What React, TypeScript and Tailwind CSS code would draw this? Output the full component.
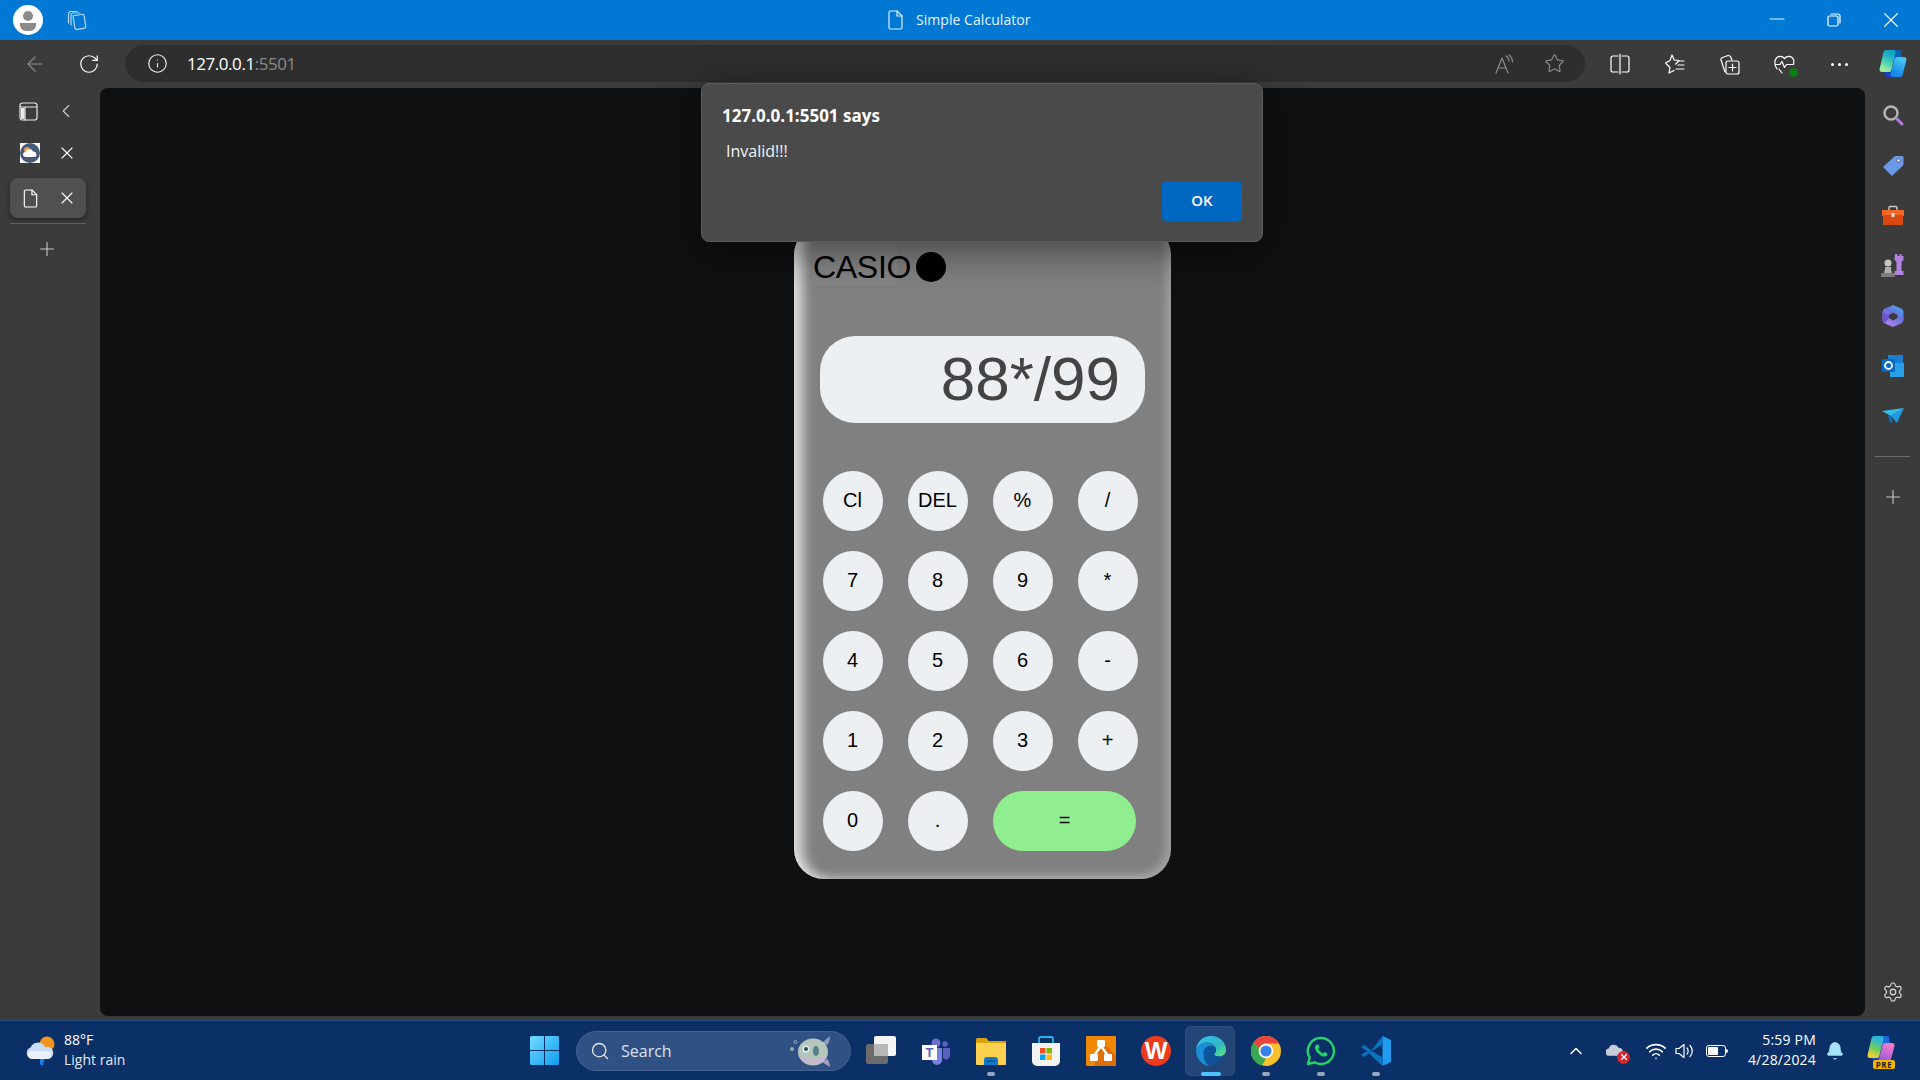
import React from "react";
import { ArrowLeft, RotateCw, Info, Star, Plus, X, Minus, ChevronLeft, ChevronUp, Search, Settings, Bell, Wifi } from "lucide-react";

const Stroke = ({ className, children, vb = "0 0 20 20" }: { className?: string; children: React.ReactNode; vb?: string }) => (
  <svg viewBox={vb} className={className} fill="none" stroke="currentColor" strokeWidth="1.2" strokeLinecap="round" strokeLinejoin="round">{children}</svg>
);

const FileIcon = ({ className }: { className?: string }) => (
  <Stroke className={className} vb="0 0 16 20"><path d="M3 1h6.5L14.5 6v11.5a1.5 1.5 0 0 1-1.5 1.5H3a1.5 1.5 0 0 1-1.5-1.5v-15A1.5 1.5 0 0 1 3 1z" /><path d="M9.5 1v5h5" /></Stroke>
);

const Avatar = () => (
  <div className="w-[30px] h-[30px] rounded-full bg-white flex items-center justify-center">
    <svg viewBox="0 0 30 30" className="w-[30px] h-[30px]"><circle cx="15" cy="11" r="5" fill="#8a8a8a" /><path d="M7 18h16v2a6 6 0 0 1-6 6h-4a6 6 0 0 1-6-6z" fill="#8a8a8a" /></svg>
  </div>
);

const Windows = () => (
  <svg viewBox="0 0 29 29" className="w-[29px] h-[29px]">
    <defs><linearGradient id="wg" x1="0" y1="0" x2="1" y2="1"><stop offset="0" stopColor="#6fdcff" /><stop offset="1" stopColor="#0f9cf0" /></linearGradient></defs>
    <path d="M0 1.5A1.5 1.5 0 0 1 1.500 0H14v14H0zM15 0h12.500A1.500 1.500 0 0 1 29 1.500V14H15zM0 15h14v14H1.500A1.500 1.500 0 0 1 0 27.500zM15 15h14v12.500a1.500 1.500 0 0 1-1.500 1.500H15z" fill="url(#wg)" />
  </svg>
);

const WeatherIcon = () => (
  <svg viewBox="0 0 30 30" className="w-[30px] h-[30px]">
    <circle cx="22" cy="8" r="7.500" fill="#f5931f" />
    <path d="M15 21l5 0-2 8a2.500 2.500 0 0 1-3-1z" fill="#1a7fe8" />
    <path d="M7 23a6 6 0 0 1-1.500-11.500A8 8 0 0 1 20 11a6 6 0 0 1 4 12z" fill="#c9dcf7" />
    <path d="M3 20a4 4 0 0 1 3-5h18a5 5 0 0 1 2 3 5 5 0 0 1-3 5H7a5 5 0 0 1-4-3z" fill="#eaf2fd" />
  </svg>
);

const Fish = () => (
  <svg viewBox="0 0 44 34" className="w-[44px] h-[34px]">
    <circle cx="3" cy="15" r="2" fill="#8fb0a0" /><circle cx="6.500" cy="8" r="1.500" fill="none" stroke="#bcd" strokeWidth="0.700" />
    <path d="M41 2c0 3-1 7-3 9l-5-2z" fill="#8d9cb4" /><path d="M41 33c0-3-1-6-3-8l-5 3z" fill="#a99ab8" />
    <ellipse cx="24" cy="18" rx="15" ry="13.500" fill="#b6c6bd" />
    <path d="M10 22c4 8 22 11 28 1-8 3-20 3-28-1z" fill="#c9b3d2" />
    <circle cx="17" cy="15" r="3.500" fill="#e5efe8" /><circle cx="17" cy="15" r="2" fill="#26505a" />
    <ellipse cx="27" cy="17" rx="3" ry="5" fill="#54808a" />
  </svg>
);

const Edge = () => (
  <svg viewBox="0 0 30 30" className="w-[30px] h-[30px]">
    <defs>
      <linearGradient id="eg1" x1="0" y1="0" x2="1" y2="1"><stop offset="0" stopColor="#35c1f1" /><stop offset="0.600" stopColor="#2fb6c6" /><stop offset="1" stopColor="#66eb6e" /></linearGradient>
      <linearGradient id="eg2" x1="0" y1="0" x2="1" y2="1"><stop offset="0" stopColor="#0c59a4" /><stop offset="1" stopColor="#114a8b" /></linearGradient>
    </defs>
    <path d="M15 0C23.500 0 30 6 30 14c0 4-3 6.500-7 6.500-3 0-5-1-5-2.500 1-1 2-2 2-4 0-4-4-7.500-9-7.500C6 6.500 1.500 9.500 0 14 .5 6 7 0 15 0z" fill="url(#eg1)" />
    <path d="M0 14c1.500-4.500 6-7.500 11-7.500 3.500 0 7 2 8.500 5-4-3-10-2-11.500 3-1.500 6 3 13 10 15C8 32 0 24 0 14z" fill="#1b8fd8" />
    <path d="M8 15c1.500-5 7.500-6 11.500-3 .5 1 .5 1.500.5 2 0 2-1 3-2 4 0 1.500 2 2.500 5 2.500 2 0 4-.5 5.500-2C26.500 25 21 30 15 30c-5 0-8.500-8-7-15z" fill="url(#eg2)" />
  </svg>
);

const Chrome = () => (
  <svg viewBox="0 0 30 30" className="w-[30px] h-[30px]">
    <circle cx="15" cy="15" r="15" fill="#fbc02d" />
    <path d="M15 0a15 15 0 0 1 13 7.500H15a7.500 7.500 0 0 0-7 5L2.500 6.500A15 15 0 0 1 15 0z" fill="#e8453c" />
    <path d="M2.500 6.500 8 12.500A7.500 7.500 0 0 0 15 22.500L11 29.500A15 15 0 0 1 2.500 6.500z" fill="#34a853" />
    <circle cx="15" cy="15" r="7.200" fill="#fff" /><circle cx="15" cy="15" r="5.600" fill="#3b82e8" />
  </svg>
);

const WhatsApp = () => (
  <svg viewBox="0 0 30 30" className="w-[30px] h-[30px]" fill="none">
    <path d="M15 2a13 13 0 1 1-6.500 24.300L2 28l1.700-6.300A13 13 0 0 1 15 2z" stroke="#25d366" strokeWidth="2.400" strokeLinejoin="round" />
    <path d="M10 9c1-1 2-1 2.500 0l1 2.300-1.200 1.700c1 2 2.500 3.400 4.700 4.500l1.600-1.400 2.400 1.100c.8.500.6 1.500 0 2.300-1.500 1.600-4 1.400-7-.5-3-2-5-5-5-7.500 0-1 .4-1.800 1-2.500z" fill="#25d366" />
  </svg>
);

const VSCode = () => (
  <svg viewBox="0 0 30 30" className="w-[30px] h-[30px]">
    <path d="M21.500 0 30 4v22l-8.500 4z" fill="#1f9cf0" />
    <path d="M21.500 0v8.500L11 15 3 9l-3 2.500 6.500 3.500L0 18.500 3 21l8-6 10.500 6.500V30L8 17.500z" fill="#0a74c2" />
  </svg>
);

const Store = () => (
  <svg viewBox="0 0 30 30" className="w-[30px] h-[30px]">
    <path d="M8 7V2.500A1.500 1.500 0 0 1 9.500 1h11A1.500 1.500 0 0 1 22 2.500V7" fill="none" stroke="#27b2ea" strokeWidth="1.800" />
    <path d="M1 7h28v18a5 5 0 0 1-5 5H6a5 5 0 0 1-5-5z" fill="#f3f3f3" />
    <rect x="9" y="12" width="5.500" height="5.500" fill="#f25022" /><rect x="15.500" y="12" width="5.500" height="5.500" fill="#7fba00" />
    <rect x="9" y="18.500" width="5.500" height="5.500" fill="#00a4ef" /><rect x="15.500" y="18.500" width="5.500" height="5.500" fill="#ffb900" />
  </svg>
);

const Folder = () => (
  <svg viewBox="0 0 30 30" className="w-[30px] h-[30px]">
    <path d="M0 3.500A1.500 1.500 0 0 1 1.500 2H10l3 3h17v4H0z" fill="#d9a209" />
    <path d="M0 7h30v21a1 1 0 0 1-1 1H1a1 1 0 0 1-1-1z" fill="#fcd14f" />
    <path d="M8 29v-5a3 3 0 0 1 3-3h8a3 3 0 0 1 3 3v5z" fill="#0f78c8" /><rect x="11" y="24.500" width="8" height="1.500" fill="#0a4f88" />
  </svg>
);

const Teams = () => (
  <svg viewBox="0 0 30 30" className="w-[30px] h-[30px]">
    <circle cx="15" cy="7" r="4.500" fill="#6a6fd0" /><circle cx="24" cy="8" r="2.800" fill="#5b60c0" />
    <path d="M11 12h10v12a5 5 0 0 1-10 0z" fill="#7b80dc" /><path d="M22 12h7v8a4 4 0 0 1-7 2z" fill="#5b60c0" />
    <rect x="1" y="9" width="15" height="15" fill="#fff" />
    <text x="8.500" y="21" textAnchor="middle" fontSize="13" fontWeight="700" fill="#5b60c0" fontFamily="Liberation Sans, sans-serif">T</text>
  </svg>
);

const Drawio = () => (
  <svg viewBox="0 0 30 30" className="w-[30px] h-[30px]">
    <rect width="30" height="30" rx="1" fill="#f08705" />
    <path d="M14 3 30 20v9a1 1 0 0 1-1 1H8z" fill="#d76a08" opacity="0.800" />
    <path d="M15 10 8.500 19M15 10l6.500 9" stroke="#fff" strokeWidth="2.500" />
    <rect x="11" y="4" width="8" height="7" rx="1" fill="#fff" /><rect x="4" y="18" width="8" height="7" rx="1" fill="#fff" /><rect x="18" y="18" width="8" height="7" rx="1" fill="#fff" />
  </svg>
);

const Wps = () => (
  <svg viewBox="0 0 30 30" className="w-[30px] h-[30px]">
    <circle cx="15" cy="15" r="15" fill="#ee3a1c" />
    <text x="15" y="23" textAnchor="middle" fontSize="24" fontWeight="700" fill="#fff" fontFamily="Liberation Sans, sans-serif">W</text>
  </svg>
);

const TaskCopy = () => (
  <svg viewBox="0 0 30 30" className="w-[30px] h-[30px]">
    <rect x="0" y="8" width="22" height="20" rx="2" fill="#6b6b6b" />
    <rect x="8" y="0" width="22" height="20" rx="2" fill="#f5f5f5" />
    <rect x="8" y="8" width="14" height="12" fill="#b8b8b8" />
  </svg>
);

const Copilot = ({ pre = false }: { pre?: boolean }) => {
  const a = pre ? "cpa" : "cpb";
  const b = pre ? "cpc" : "cpd";
  return (
    <svg viewBox="0 0 30 28" className="w-[30px] h-[28px]">
      <defs>
        <linearGradient id={a} x1="0.600" y1="0" x2="0.300" y2="1">
          <stop offset="0" stopColor={pre ? "#2eb3dc" : "#12a5c8"} />
          <stop offset="0.600" stopColor={pre ? "#6fce5a" : "#4fd3b0"} />
          <stop offset="1" stopColor={pre ? "#e8d23a" : "#9aeba0"} />
        </linearGradient>
        <linearGradient id={b} x1="0.700" y1="0" x2="0.300" y2="1">
          <stop offset="0" stopColor={pre ? "#f07ac8" : "#45c2f2"} />
          <stop offset="1" stopColor={pre ? "#9a5be0" : "#1389e6"} />
        </linearGradient>
      </defs>
      <path d="M13 1 22 1 23 8 16 8z" fill={pre ? "#1a68d8" : "#0b62b0"} stroke={pre ? "#1a68d8" : "#0b62b0"} strokeWidth="2" strokeLinejoin="round" />
      <path d="M7 22 17 22 18 26 9 26z" fill="#1b3fc0" stroke="#1b3fc0" strokeWidth="2" strokeLinejoin="round" />
      <path d="M8 2.500h7L11 19.500H4z" fill={`url(#${a})`} stroke={`url(#${a})`} strokeWidth="5" strokeLinejoin="round" />
      <path d="M19 9.500h7L22 24.500h-7z" fill={`url(#${b})`} stroke={`url(#${b})`} strokeWidth="5" strokeLinejoin="round" />
    </svg>
  );
};

const TabWeather = () => (
  <svg viewBox="0 0 20 20" className="w-5 h-5">
    <rect width="20" height="20" fill="#fff" /><circle cx="10" cy="10" r="10" fill="#465a78" />
    <circle cx="7" cy="7" r="3" fill="#f0954a" />
    <path d="M5.500 14a2.500 2.500 0 0 1 0-5 4 4 0 0 1 7.500-.5 3 3 0 0 1 2 5.500z" fill="#fff" />
  </svg>
);

const ToolBtn = ({ children, w = "w-[45px]" }: { children: React.ReactNode; w?: string }) => (
  <div className={`${w} h-full flex items-center justify-center`}>{children}</div>
);

const keys = ["Cl", "DEL", "%", "/", "7", "8", "9", "*", "4", "5", "6", "-", "1", "2", "3", "+", "0", "."];

const Key = ({ label }: { label: string }) => (
  <button className="w-[60px] h-[60px] rounded-full bg-[#edf0f3] text-black text-[20px] leading-none flex items-center justify-center pb-[3px] pr-[1px]">{label}</button>
);

const TaskApp = ({ children, dot, active }: { children: React.ReactNode; dot?: boolean; active?: boolean }) => (
  <div className="w-[55px] h-[60px] relative flex items-center justify-center">
    {active && <div className="absolute left-[2px] top-[5px] w-[50px] h-[50px] rounded-md bg-white/10 border border-white/5" />}
    <div className="relative">{children}</div>
    {dot && <div className={`absolute bottom-[5px] left-1/2 -translate-x-1/2 h-[4px] rounded-full ${active ? "w-[20px] bg-[#4cc2ff]" : "w-[8px] bg-[#9aa7ba]"}`} />}
  </div>
);

export default function App() {
  return (
    <div className="relative w-[1920px] h-[1080px] overflow-hidden flex flex-col bg-[#3b3b3b] font-['Open_Sans',sans-serif]">
      {/* Title bar */}
      <div className="h-10 bg-[#0078d4] flex items-center text-white shrink-0 relative">
        <div className="ml-[13px]"><Avatar /></div>
        <Stroke className="ml-[23px] w-[22px] h-[22px] text-[#b8d8f2]" vb="0 0 22 22">
          <path d="M8 6h9a2 2 0 0 1 2 2v10a2 2 0 0 1-2 2H10a2 2 0 0 1-2-2z" transform="rotate(-8 13 13)" />
          <path d="M5 16V6a2 2 0 0 1 2-2h7M2.500 14V5a2.500 2.500 0 0 1 2.500-2.500h6" />
        </Stroke>
        <div className="absolute left-[887px] top-[10px] flex items-center">
          <FileIcon className="w-[17px] h-[20px] text-[#e0f0ff]" />
          <span className="ml-[12px] text-[14px] tracking-[0.05px] text-[#e6f3fc] leading-5">Simple Calculator</span>
        </div>
        <div className="ml-auto flex items-center h-full">
          <Minus className="w-[24px] h-[24px] mr-[38px] -mt-[2px]" strokeWidth={0.9} />
          <Stroke className="w-[14px] h-[14px] mr-[37px]" vb="0 0 14 14">
            <rect x="1" y="3" width="10" height="10" rx="1.500" /><path d="M4 1h7a2 2 0 0 1 2 2v7" />
          </Stroke>
          <X className="w-[26px] h-[26px] mr-[16px]" strokeWidth={1} />
        </div>
      </div>

      {/* Toolbar */}
      <div className="h-12 flex items-center shrink-0">
        <div className="w-[125px] flex items-center pl-[23px] gap-[31px]">
          <ArrowLeft className="w-6 h-6 text-[#8a8a8a]" strokeWidth={1.2} />
          <RotateCw className="w-[22px] h-[22px] text-white" strokeWidth={1.3} />
        </div>
        <div className="w-[1460px] h-[37px] -mt-[1px] rounded-full bg-[#2e2e2e] flex items-center">
          <Info className="ml-[22px] w-[21px] h-[21px] text-[#eeeeee]" strokeWidth={1.3} />
          <span className="ml-[19px] text-[17px] tracking-[-0.45px] text-white">127.0.0.1<span className="text-[#8a8a8a]">:5501</span></span>
          <div className="ml-auto flex items-center gap-[29px] mr-[20px]">
            <Stroke className="w-[20px] h-[20px] text-[#8d8d8d]" vb="0 0 20 20">
              <path d="M1 19 7 4l6 15M3 14h8" /><path d="M11 2c2 1 3 3 3 5M14 1c2 1.500 3.500 4 3.500 7" />
            </Stroke>
            <Star className="w-[21px] h-[21px] text-[#8d8d8d]" strokeWidth={1.3} />
          </div>
        </div>
        <div className="flex items-center h-full ml-[7px]">
          <ToolBtn w="w-[55px]">
            <Stroke className="w-[20px] h-[22px] text-white" vb="0 0 20 22"><path d="M8 3H3a2 2 0 0 0-2 2v12a2 2 0 0 0 2 2h5M12 3h5a2 2 0 0 1 2 2v12a2 2 0 0 1-2 2h-5M10 1v20" /></Stroke>
          </ToolBtn>
          <ToolBtn w="w-[55px]">
            <Stroke className="w-[21px] h-[20px] text-white" vb="0 0 21 20"><path d="M8 1l2.200 5 5 .5-3.500 3.500M5 19l1-5.500L1.500 9 6 6.500 8 1M5 19l5-2.500M14 7h6M14 11h6M12 15h8" /></Stroke>
          </ToolBtn>
          <ToolBtn w="w-[55px]">
            <Stroke className="w-[21px] h-[21px] text-white" vb="0 0 21 21"><path d="M6 18 2 6a2 2 0 0 1 1.500-2.500L9 1.500a3 3 0 0 1 3 2l1 2.500" /><rect x="7" y="7" width="13" height="13" rx="2" /><path d="M13.500 10v7M10 13.500h7" /></Stroke>
          </ToolBtn>
          <ToolBtn w="w-[55px]">
            <div className="relative w-[21px] h-[21px]">
              <Stroke className="w-[21px] h-[21px] text-white" vb="0 0 21 21"><path d="M3 15C1 12 0 9 1.500 5.500 3.500 1.500 8 1.500 10.500 4.500c2.500-3 7-3 9 1 .5 1.500.5 3 0 4.500M1 10.500h5l2-3 2.500 6 2-3h7M5 15l3 4" /></Stroke>
              <div className="absolute right-[-3px] bottom-[-2px] w-[9px] h-[9px] rounded-full bg-[#0f7b0f]" />
            </div>
          </ToolBtn>
          <ToolBtn w="w-[55px]">
            <div className="flex gap-[4px]"><i className="w-[3px] h-[3px] rounded-full bg-white block" /><i className="w-[3px] h-[3px] rounded-full bg-white block" /><i className="w-[3px] h-[3px] rounded-full bg-white block" /></div>
          </ToolBtn>
          <div className="ml-[11px]"><Copilot /></div>
        </div>
      </div>

      {/* Middle */}
      <div className="flex-1 flex min-h-0">
        {/* Left rail */}
        <div className="w-[100px] shrink-0 pl-[10px] pt-[13px] flex flex-col">
          <div className="w-[76px] h-[20px] flex items-center text-[#e8e8e8]">
            <Stroke className="ml-[9px] w-[19px] h-[19px]" vb="0 0 19 19"><rect x="1" y="1" width="17" height="17" rx="2.500" /><path d="M1 5h17M6 5v13" /><path d="M2 6h3.500v11H3a1 1 0 0 1-1-1z" fill="currentColor" stroke="none" /></Stroke>
            <ChevronLeft className="ml-[17px] w-[22px] h-[22px] text-[#d0d0d0]" strokeWidth={1.2} />
          </div>
          <div className="w-[76px] h-[20px] mt-[22px] flex items-center">
            <div className="ml-[10px]"><TabWeather /></div>
            <X className="ml-[17px] w-[20px] h-[20px] text-white" strokeWidth={1.3} />
          </div>
          <div className="w-[76px] h-10 mt-[15px] rounded-lg bg-[#505050] shadow-[0_2px_5px_rgba(0,0,0,0.4)] flex items-center text-white">
            <FileIcon className="ml-[12px] w-[17px] h-[19px]" />
            <X className="ml-[18px] w-[20px] h-[20px]" strokeWidth={1.3} />
          </div>
          <div className="w-[76px] h-px mt-[5px] bg-[#5e5e5e]" />
          <Plus className="ml-[26px] mt-[14px] w-[22px] h-[22px] text-[#c8c8c8]" strokeWidth={1.2} />
        </div>

        {/* Content */}
        <div className="flex-1 mb-[4px] rounded-lg bg-[#0f1012] flex items-center justify-center">
          <div className="relative w-[377px] h-[654px] rounded-[30px] bg-[#808080] shadow-[inset_14px_0_12px_-5px_rgba(255,255,255,0.72),inset_-5px_-4px_9px_rgba(255,255,255,0.25)] font-['Liberation_Sans',Arial,sans-serif] flex flex-col">
            <div className="absolute left-[19px] top-[18px] w-[84px] h-[42px] bg-white/[0.04]" />
            <div className="h-[111px] pl-[19px] pt-[27px] flex items-start shrink-0">
              <div className="relative h-[29px] flex items-center gap-[5px]">
                <span className="text-[32px] leading-none text-black -tracking-[0.3px]">CASIO</span>
                <span className="w-[30px] h-[30px] rounded-full bg-black block" />
              </div>
            </div>
            <div className="ml-[26px] w-[325px] h-[87px] rounded-[35px] bg-[#edf0f3] flex items-center justify-end pr-[25px] pb-[2px] text-[62px] leading-none text-[#444444] shrink-0">88*/99</div>
            <div className="ml-[29px] mt-[48px] grid grid-cols-[repeat(4,60px)] gap-x-[25px] gap-y-[20px]">
              {keys.map((k) => <Key key={k} label={k} />)}
              <button className="col-span-2 w-[143px] h-[60px] rounded-full bg-[#90ee90] text-black text-[20px] leading-none flex items-center justify-center pb-[3px]">=</button>
            </div>
          </div>
        </div>

        {/* Right rail */}
        <div className="w-[55px] shrink-0 flex flex-col items-center pt-[14px]">
          <div className="h-[26px] flex items-center">
            <svg viewBox="0 0 22 22" className="w-[22px] h-[22px]" fill="none"><circle cx="9" cy="9" r="6.500" stroke="#b5b5b5" strokeWidth="2.400" /><path d="M14.500 14.500 20 20" stroke="#b07ae0" strokeWidth="3" strokeLinecap="round" /></svg>
          </div>
          <div className="h-[26px] mt-[25px] flex items-center">
            <svg viewBox="0 0 22 22" className="w-[22px] h-[22px]"><path d="M13 1h7a1.500 1.500 0 0 1 1.500 1.500V10L10 21 1 12z" fill="#6b9ae8" /><circle cx="16.500" cy="5.500" r="1.800" fill="#e8eef8" stroke="#334" strokeWidth="0.600" /></svg>
          </div>
          <div className="h-[26px] mt-[23px] flex items-center">
            <svg viewBox="0 0 22 20" className="w-[22px] h-[20px]"><path d="M7 5V2.500a1 1 0 0 1 1-1h6a1 1 0 0 1 1 1V5" fill="none" stroke="#c8c8c8" strokeWidth="1.400" /><path d="M0 5h22v6H0z" fill="#f26a26" /><path d="M1 10h20v9a1 1 0 0 1-1 1H2a1 1 0 0 1-1-1z" fill="#d9480f" /><rect x="9.500" y="8" width="3" height="4" fill="#ddd" /></svg>
          </div>
          <div className="h-[26px] mt-[24px] flex items-center">
            <svg viewBox="0 0 24 24" className="w-[24px] h-[24px]"><path d="M14 1h2.500v2h2V1h2v2h2V1v6l-2 2v9h2v4h-9v-4h2V9l-2-2z" fill="#b083e0" /><circle cx="7" cy="10" r="3.500" fill="#c5c5c5" /><path d="M4 14h6v2l1 4H3l1-4z" fill="#b0b0b0" /><rect x="0" y="20" width="14" height="4" rx="1" fill="#7c7c7c" /></svg>
          </div>
          <div className="h-[26px] mt-[25px] flex items-center">
            <svg viewBox="0 0 22 22" className="w-[22px] h-[22px]"><defs><linearGradient id="m365" x1="1" y1="0" x2="0.300" y2="1"><stop offset="0" stopColor="#3fb6ea" /><stop offset="0.500" stopColor="#6a6fe0" /><stop offset="1" stopColor="#b583e8" /></linearGradient></defs><path d="M11 0 19 3.500a4 4 0 0 1 2.500 3.500v8a4 4 0 0 1-2.500 3.500L11 22 3 18.500a4 4 0 0 1-2.500-3.500V7A4 4 0 0 1 3 3.500z" fill="url(#m365)" /><path d="M11 7.500l4.500 2.500v3L11 15.500 7 13v-3z" fill="#3b3b3b" /><path d="M.5 7 7 10v3l-4 5a4 4 0 0 1-2.500-3z" fill="#6a58d0" /></svg>
          </div>
          <div className="h-[26px] mt-[24px] flex items-center">
            <svg viewBox="0 0 22 22" className="w-[22px] h-[22px]"><rect x="6" y="0" width="15" height="9" fill="#1a7fd0" /><path d="M8 8h14v13a1 1 0 0 1-1 1H8z" fill="#27a0e8" /><rect x="0" y="4" width="13" height="13" rx="1.500" fill="#0a6cc0" /><circle cx="6.500" cy="10.500" r="3.500" fill="none" stroke="#fff" strokeWidth="1.800" /></svg>
          </div>
          <div className="h-[26px] mt-[24px] flex items-center">
            <svg viewBox="0 0 22 16" className="w-[22px] h-[16px]"><path d="M0 3 22 0 9 8z" fill="#35bdf0" /><path d="M22 0 15 15 9 8z" fill="#1e9be0" /><path d="M6 7 9 8l2 6-3 1z" fill="#0a6cc0" /></svg>
          </div>
          <div className="w-[35px] h-px mt-[27px] bg-[#6a6a6a]" />
          <Plus className="mt-[29px] w-[22px] h-[22px] text-[#c8c8c8]" strokeWidth={1.2} />
          <Settings className="mt-auto mb-[17px] w-[22px] h-[22px] text-[#d0d0d0]" strokeWidth={1.4} />
        </div>
      </div>

      {/* Taskbar */}
      <div className="h-[60px] shrink-0 bg-[#0b3068] border-t border-[#2c5081] flex items-center text-white">
        <div className="w-[530px] pl-[25px] flex items-center shrink-0">
          <WeatherIcon />
          <div className="ml-[9px] -mt-[1px] text-[14px] leading-[20px]">
            <div>88°F</div>
            <div className="text-[#e2e8f2]">Light rain</div>
          </div>
        </div>
        <Windows />
        <div className="ml-[17px] w-[275px] h-10 rounded-full bg-[#2f5184] border border-[#416293] flex items-center pl-[13px]">
          <Search className="w-[20px] h-[20px] text-[#e8e8e8]" strokeWidth={1.6} />
          <span className="ml-[11px] text-[16px] text-[#d9e2ee]">Search</span>
          <div className="ml-auto mr-[17px]"><Fish /></div>
        </div>
        <div className="ml-[2px] flex items-center">
          <TaskApp><TaskCopy /></TaskApp>
          <TaskApp><Teams /></TaskApp>
          <TaskApp dot><Folder /></TaskApp>
          <TaskApp><Store /></TaskApp>
          <TaskApp><Drawio /></TaskApp>
          <TaskApp><Wps /></TaskApp>
          <TaskApp dot active><Edge /></TaskApp>
          <TaskApp dot><Chrome /></TaskApp>
          <TaskApp dot><WhatsApp /></TaskApp>
          <TaskApp dot><VSCode /></TaskApp>
        </div>
        <div className="ml-auto flex items-center h-full pr-[24px]">
          <ChevronUp className="w-[20px] h-[20px]" strokeWidth={1.8} />
          <div className="relative ml-[20px] w-[20px] h-[20px]">
            <svg viewBox="0 0 20 14" className="absolute top-[2px] w-[18px] h-[13px]"><path d="M4 14a4 4 0 0 1-1-8 6 6 0 0 1 11-1 5 5 0 0 1 3 9z" fill="#c5ccd8" /></svg>
            <div className="absolute right-[-4px] bottom-[-3px] w-[13px] h-[13px] rounded-full bg-[#d8232f] flex items-center justify-center"><X className="w-[10px] h-[10px]" strokeWidth={3} /></div>
          </div>
          <Wifi className="ml-[19px] w-[22px] h-[22px]" strokeWidth={1.8} />
          <Stroke className="ml-[8px] w-[20px] h-[20px]" vb="0 0 20 20"><path d="M1 7.500v5h3l5 4v-13l-5 4zM12 7c1.500 1.500 1.500 4.500 0 6M15 4.500c3 3 3 8 0 11" /></Stroke>
          <div className="ml-[11px] relative w-[20px] h-[12px] rounded-[3px] border border-white">
            <div className="absolute left-[1px] top-[1px] bottom-[1px] w-[10px] rounded-[1px] bg-white" />
            <div className="absolute right-[-3px] top-[3px] w-[2px] h-[4px] bg-white rounded-r" />
          </div>
          <div className="ml-[21px] -mt-[2px] w-[69px] text-right text-[14px] tracking-[0.2px] leading-[20px] whitespace-nowrap">
            <div>5:59 PM</div>
            <div>4/28/2024</div>
          </div>
          <Bell className="ml-[9px] w-[20px] h-[20px] text-[#a5e3fb]" fill="#a5e3fb" strokeWidth={1.2} />
          <div className="relative ml-[21px] w-[30px] h-[30px]">
            <Copilot pre />
            <span className="absolute left-[7px] bottom-[-3px] w-[22px] h-[9px] rounded-[2px] bg-[#f2b600] text-[#222] text-[8px] leading-[9px] font-bold text-center tracking-[0.5px]">PRE</span>
          </div>
        </div>
      </div>

      {/* Alert dialog */}
      <div className="absolute left-[701px] top-[83px] w-[562px] h-[159px] rounded-lg bg-[#4a4a4a] border border-[#5c5c5c] shadow-[0_8px_40px_rgba(0,0,0,0.5)] text-white">
        <div className="ml-[20px] mt-[20px] text-[17px] font-bold leading-[24px]">127.0.0.1:5501 says</div>
        <div className="ml-[24px] mt-[13px] text-[16px] leading-[20px] text-[#f2f2f2]">Invalid!!!</div>
        <button className="absolute right-[20px] bottom-[20px] w-[80px] h-10 rounded bg-[#0067c0] text-[15px] font-semibold text-white pb-[2px]">OK</button>
      </div>
    </div>
  );
}
